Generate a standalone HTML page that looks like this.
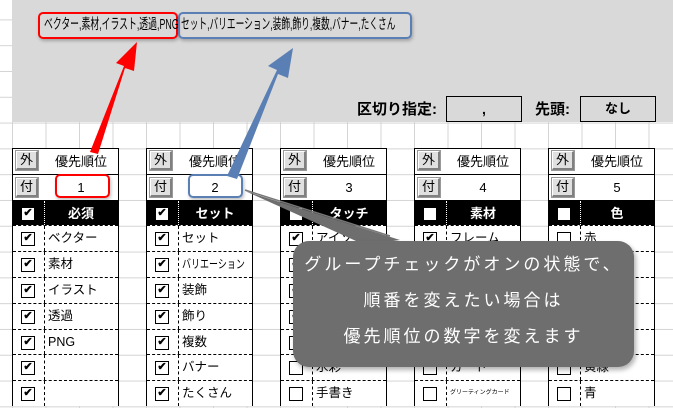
<!DOCTYPE html>
<html><head><meta charset="utf-8"><style>
*{margin:0;padding:0;box-sizing:border-box}
body{width:673px;height:408px;overflow:hidden;position:relative;background:#fff;font-family:"Liberation Sans","Noto Sans CJK JP",sans-serif;color:#000}
.grid{position:absolute;left:0;top:0;width:673px;height:408px;
background-image:linear-gradient(to right,#d4d4d4 1px,transparent 1px),linear-gradient(to bottom,#d4d4d4 1px,transparent 1px);
background-size:33.5px 25.8px;background-position:12px 19.4px}
.top{position:absolute;left:12px;top:0;width:661px;height:122px;background:#d9d9d9}
.a{position:absolute}
.tb{position:absolute;border-radius:5px;box-shadow:1px 2px 3px rgba(0,0,0,.25)}
.tt{position:absolute;font-size:14.5px;line-height:24px;white-space:nowrap;transform-origin:left center;display:inline-block}
.g{position:absolute;top:148px;width:107px;height:258px;background:#fff;border-left:1.5px solid #000;border-right:1.5px solid #000}
.r{position:absolute;left:0;width:100%;height:25.8px;border-top:1px dashed #000}
.d{position:absolute;left:31px;top:0;bottom:0;border-left:1px dashed #000}
.btn{position:absolute;left:3px;width:22px;height:19px;background:#e0e0e0;border:1px solid #fff;border-right:2px solid #808080;border-bottom:2px solid #808080;font-size:13px;text-align:center;line-height:16px;outline:1px solid #999}
.cb{position:absolute;left:8px;top:6px;width:14px;height:14px;border:1.5px solid #000;background:#fff;font-size:11px;line-height:11px;text-align:center;font-weight:bold;color:#000}
.t{position:absolute;left:35px;top:0;font-size:12.5px;line-height:25px;white-space:nowrap}
.hd{background:#000;color:#fff;border-top:1px solid #000}
.hd .t{left:31px;right:0;text-align:center;font-weight:bold;font-size:13px}
.hd .d{border-left:1px dotted #fff}
.c{position:absolute;left:31px;right:0;text-align:center;font-size:13px;line-height:25px}
</style></head><body>
<div class="grid"></div>
<div class="top"></div>
<div class="tb" style="left:38px;top:12px;width:140px;height:27px;border:2px solid #f00"></div>
<div class="tb" style="left:178px;top:12px;width:234px;height:27px;border:2px solid #5a7fb5"></div>
<span class="tt" style="left:44px;top:13px;transform:scaleX(0.61)">ベクター,素材,イラスト,透過,PNG</span>
<span class="tt" style="left:181px;top:13px;transform:scaleX(0.60)">セット,バリエーション,装飾,飾り,複数,バナー,たくさん</span>
<div class="a" style="left:357px;top:98px;font-size:15px;font-weight:bold;line-height:24px">区切り指定:</div>
<div class="a" style="left:446px;top:96px;width:76px;height:26px;border:1.5px solid #000;text-align:center;font-weight:bold;font-size:14px;line-height:24px">,</div>
<div class="a" style="left:535px;top:98px;font-size:15px;font-weight:bold;line-height:24px">先頭:</div>
<div class="a" style="left:580px;top:96px;width:76px;height:26px;border:1.5px solid #000;text-align:center;font-weight:bold;font-size:13px;line-height:24px">なし</div>

<div class="g" style="left:12px">
<div class="r" style="top:0;border-top:1.5px solid #000"><div class="btn" style="top:2px">外</div><div class="c">優先順位</div></div>
<div class="r" style="top:25.8px;border-top:1px solid #000"><div class="btn" style="top:3px">付</div><div class="c">1</div></div>
<div class="r hd" style="top:51.6px"><div class="d"></div><div class="cb">✔</div><div class="t">必須</div></div>
<div class="r" style="top:77.4px"><div class="d"></div><div class="cb">✔</div><div class="t">ベクター</div></div>
<div class="r" style="top:103.2px"><div class="d"></div><div class="cb">✔</div><div class="t">素材</div></div>
<div class="r" style="top:129px"><div class="d"></div><div class="cb">✔</div><div class="t">イラスト</div></div>
<div class="r" style="top:154.8px"><div class="d"></div><div class="cb">✔</div><div class="t">透過</div></div>
<div class="r" style="top:180.6px"><div class="d"></div><div class="cb">✔</div><div class="t">PNG</div></div>
<div class="r" style="top:206.4px"><div class="d"></div><div class="cb">✔</div><div class="t"></div></div>
<div class="r" style="top:232.2px"><div class="d"></div><div class="cb">✔</div><div class="t"></div></div>
</div>
<div class="g" style="left:146px">
<div class="r" style="top:0;border-top:1.5px solid #000"><div class="btn" style="top:2px">外</div><div class="c">優先順位</div></div>
<div class="r" style="top:25.8px;border-top:1px solid #000"><div class="btn" style="top:3px">付</div><div class="c">2</div></div>
<div class="r hd" style="top:51.6px"><div class="d"></div><div class="cb">✔</div><div class="t">セット</div></div>
<div class="r" style="top:77.4px"><div class="d"></div><div class="cb">✔</div><div class="t">セット</div></div>
<div class="r" style="top:103.2px"><div class="d"></div><div class="cb">✔</div><div class="t" style="font-size:12px;transform:scaleX(0.75);transform-origin:left center">バリエーション</div></div>
<div class="r" style="top:129px"><div class="d"></div><div class="cb">✔</div><div class="t">装飾</div></div>
<div class="r" style="top:154.8px"><div class="d"></div><div class="cb">✔</div><div class="t">飾り</div></div>
<div class="r" style="top:180.6px"><div class="d"></div><div class="cb">✔</div><div class="t">複数</div></div>
<div class="r" style="top:206.4px"><div class="d"></div><div class="cb">✔</div><div class="t">バナー</div></div>
<div class="r" style="top:232.2px"><div class="d"></div><div class="cb">✔</div><div class="t">たくさん</div></div>
</div>
<div class="g" style="left:280px">
<div class="r" style="top:0;border-top:1.5px solid #000"><div class="btn" style="top:2px">外</div><div class="c">優先順位</div></div>
<div class="r" style="top:25.8px;border-top:1px solid #000"><div class="btn" style="top:3px">付</div><div class="c">3</div></div>
<div class="r hd" style="top:51.6px"><div class="d"></div><div class="cb"></div><div class="t">タッチ</div></div>
<div class="r" style="top:77.4px"><div class="d"></div><div class="cb">✔</div><div class="t">アイソメ</div></div>
<div class="r" style="top:103.2px"><div class="d"></div><div class="cb">✔</div></div>
<div class="r" style="top:129px"><div class="d"></div><div class="cb">✔</div></div>
<div class="r" style="top:154.8px"><div class="d"></div><div class="cb">✔</div></div>
<div class="r" style="top:180.6px"><div class="d"></div><div class="cb"></div></div>
<div class="r" style="top:206.4px"><div class="d"></div><div class="cb"></div><div class="t">水彩</div></div>
<div class="r" style="top:232.2px"><div class="d"></div><div class="cb"></div><div class="t">手書き</div></div>
</div>
<div class="g" style="left:414px">
<div class="r" style="top:0;border-top:1.5px solid #000"><div class="btn" style="top:2px">外</div><div class="c">優先順位</div></div>
<div class="r" style="top:25.8px;border-top:1px solid #000"><div class="btn" style="top:3px">付</div><div class="c">4</div></div>
<div class="r hd" style="top:51.6px"><div class="d"></div><div class="cb"></div><div class="t">素材</div></div>
<div class="r" style="top:77.4px"><div class="d"></div><div class="cb">✔</div><div class="t">フレーム</div></div>
<div class="r" style="top:103.2px"><div class="d"></div><div class="cb"></div></div>
<div class="r" style="top:129px"><div class="d"></div><div class="cb"></div></div>
<div class="r" style="top:154.8px"><div class="d"></div><div class="cb"></div></div>
<div class="r" style="top:180.6px"><div class="d"></div><div class="cb"></div></div>
<div class="r" style="top:206.4px"><div class="d"></div><div class="cb"></div><div class="t">カード</div></div>
<div class="r" style="top:232.2px"><div class="d"></div><div class="cb"></div><div class="t" style="font-size:6px">グリーティングカード</div></div>
</div>
<div class="g" style="left:548px">
<div class="r" style="top:0;border-top:1.5px solid #000"><div class="btn" style="top:2px">外</div><div class="c">優先順位</div></div>
<div class="r" style="top:25.8px;border-top:1px solid #000"><div class="btn" style="top:3px">付</div><div class="c">5</div></div>
<div class="r hd" style="top:51.6px"><div class="d"></div><div class="cb"></div><div class="t">色</div></div>
<div class="r" style="top:77.4px"><div class="d"></div><div class="cb"></div><div class="t">赤</div></div>
<div class="r" style="top:103.2px"><div class="d"></div><div class="cb"></div></div>
<div class="r" style="top:129px"><div class="d"></div><div class="cb"></div></div>
<div class="r" style="top:154.8px"><div class="d"></div><div class="cb"></div></div>
<div class="r" style="top:180.6px"><div class="d"></div><div class="cb"></div></div>
<div class="r" style="top:206.4px"><div class="d"></div><div class="cb"></div><div class="t">黄緑</div></div>
<div class="r" style="top:232.2px"><div class="d"></div><div class="cb"></div><div class="t">青</div></div>
</div>

<div class="a" style="left:55px;top:174px;width:55px;height:24px;border:2px solid #f00;border-radius:5px;box-shadow:1px 2px 3px rgba(0,0,0,.25)"></div>
<div class="a" style="left:188px;top:174px;width:55px;height:24px;border:2px solid #5a7fb5;border-radius:5px;box-shadow:1px 2px 3px rgba(0,0,0,.25)"></div>

<svg class="a" style="left:0;top:0" width="673" height="408">
<polygon points="90,152 98,154 125,68 134,71 137,42 116,63 124,66" fill="#f00"/>
<polygon points="227,176 237,179 278,74 288,78 293,48 268,66 277,70" fill="#5a7fb5"/>
<polygon points="245,191 400,240 365,245" fill="#6e6e6e"/>
<line x1="245" y1="190" x2="390" y2="236" stroke="#777" stroke-width="1.5"/>
</svg>
<div class="a" style="left:293px;top:241px;width:341px;height:126px;background:#6e6e6e;border-radius:16px;box-shadow:2px 3px 5px rgba(0,0,0,.3);color:#fff;text-align:center;font-size:17px;letter-spacing:3px;line-height:36px;padding-top:6px">グループチェックがオンの状態で、<br>順番を変えたい場合は<br>優先順位の数字を変えます</div>
</body></html>
